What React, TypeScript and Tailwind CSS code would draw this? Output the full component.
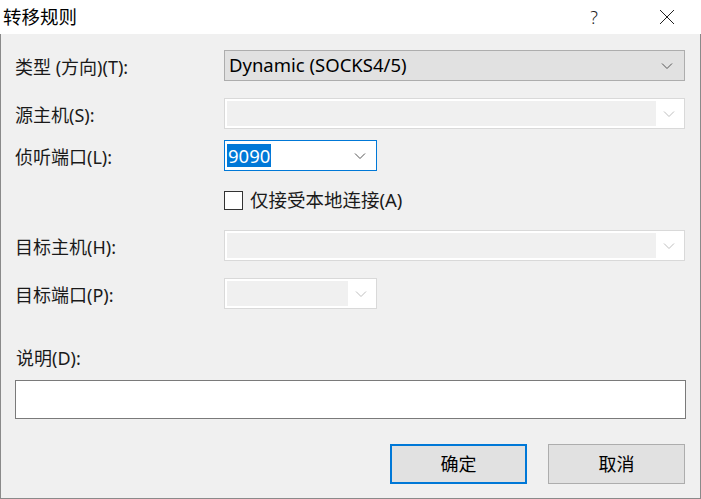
import type { ReactNode } from 'react';

const font = "font-['Noto_Sans','Noto_Sans_CJK_SC',sans-serif]";

function Chevron({ color = '#555' }: { color?: string }) {
  return (
    <svg width="12" height="8" viewBox="0 0 12 8" fill="none">
      <path d="M1 1.5 L6 6.5 L11 1.5" stroke={color} strokeWidth="1" />
    </svg>
  );
}

function Row({ label, children, className = '' }: { label: string; children: ReactNode; className?: string }) {
  return (
    <div className={`flex items-center ${className}`}>
      <div className="w-[209px] pt-[3px] text-[18px] leading-none text-[#1a1a1a]">{label}</div>
      {children}
    </div>
  );
}

function DisabledCombo({ wide }: { wide?: boolean }) {
  return (
    <div className={`flex h-[31px] ${wide ? 'w-[461px]' : 'w-[153px]'} border border-[#d9d9d9] bg-white p-[2px]`}>
      <div className="flex-1 bg-[#f0f0f0]" />
      <div className="flex w-[26px] items-center justify-center">
        <Chevron color="#bfbfbf" />
      </div>
    </div>
  );
}

export default function App() {
  return (
    <div className={`h-[499px] w-[701px] overflow-hidden bg-[#f0f0f0] ${font}`}>
      <div className="flex h-[34px] items-center bg-white">
        <span className="ml-[3px] text-[18.5px] leading-none text-black">转移规则</span>
        <span className="ml-auto mr-[61px] text-[18px] font-light leading-none text-[#222]">?</span>
        <svg className="mr-[26px]" width="16" height="16" viewBox="0 0 16 16">
          <path d="M1 1 L15 15 M15 1 L1 15" stroke="#222" strokeWidth="1" />
        </svg>
      </div>
      <div className="h-[465px] border-x border-b border-[#8a8a8a] px-[14px] pt-[16px]">
        <Row label="类型 (方向)(T):">
          <div className="flex h-[31px] w-[461px] items-center border border-[#adadad] bg-[#e1e1e1] pl-[4px] pr-[11px]">
            <span className="flex-1 text-[18.5px] leading-none text-black">Dynamic (SOCKS4/5)</span>
            <Chevron />
          </div>
        </Row>
        <Row label="源主机(S):" className="mt-[17px]">
          <DisabledCombo wide />
        </Row>
        <Row label="侦听端口(L):" className="mt-[11px]">
          <div className="flex h-[31px] w-[153px] items-center border border-[#0078d7] bg-white pl-[2px] pr-[10px]">
            <span className="bg-[#0078d7] px-[1px] text-[18.5px] leading-[23px] text-white">9090</span>
            <span className="flex-1" />
            <Chevron />
          </div>
        </Row>
        <div className="mt-[20px] flex items-center pl-[209px]">
          <div className="h-[19px] w-[19px] border border-[#333] bg-white" />
          <span className="ml-[7px] text-[18.5px] leading-none text-[#1a1a1a]">仅接受本地连接(A)</span>
        </div>
        <Row label="目标主机(H):" className="mt-[20px]">
          <DisabledCombo wide />
        </Row>
        <Row label="目标端口(P):" className="mt-[17px]">
          <DisabledCombo />
        </Row>
        <div className="mt-[40px] ml-[1px] text-[18px] leading-none text-[#1a1a1a]">说明(D):</div>
        <div className="mt-[13px] h-[39px] w-[671px] border border-[#7a7a7a] bg-white" />
        <div className="mt-[25px] flex justify-end gap-[21px] pr-[1px]">
          <button className="h-[40px] w-[137px] border-2 border-[#0078d7] bg-[#e1e1e1] text-[18px] leading-none text-black">
            确定
          </button>
          <button className="h-[40px] w-[137px] border border-[#adadad] bg-[#e1e1e1] text-[18px] leading-none text-black">
            取消
          </button>
        </div>
      </div>
    </div>
  );
}
